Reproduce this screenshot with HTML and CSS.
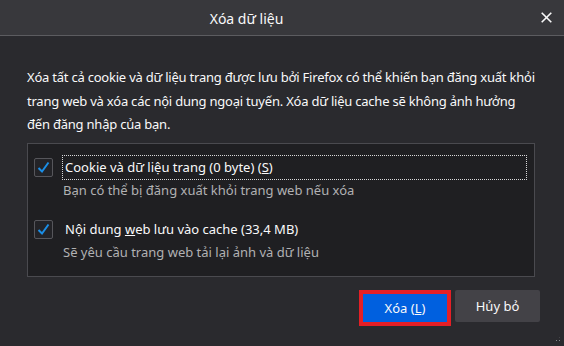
FILE: index.html
```html
<!DOCTYPE html>
<html lang="vi">
<head>
    <meta charset="utf-8">
    <title>Xóa dữ liệu</title>
    <link rel="stylesheet" href="styles.css">
</head>
<body>
<div class="dialog">
    <div class="titlebar">
        <div class="title">Xóa dữ liệu</div>
        <div class="close">
            <svg width="11" height="11" viewBox="0 0 11 11"><path d="M0.7 0.7 L10.3 10.3 M10.3 0.7 L0.7 10.3" stroke="#f9f9fa" stroke-width="1.6" fill="none"/></svg>
        </div>
    </div>
    <div class="content">
        <p class="intro">Xóa tất cả cookie và dữ liệu trang được lưu bởi Firefox có thể khiến bạn đăng xuất khỏi trang web và xóa các nội dung ngoại tuyến. Xóa dữ liệu cache sẽ không ảnh hưởng đến đăng nhập của bạn.</p>

        <div class="listbox">
            <div class="item">
                <div class="row">
                    <span class="check"><svg width="17" height="17" viewBox="0 0 17 17"><path d="M3.5 9 L7 12.5 L13.5 3.5" stroke="#1b8ee6" stroke-width="2" fill="none"/></svg></span>
                    <span class="label focused">Cookie và dữ liệu trang (0 byte) (<u>S</u>)</span>
                </div>
                <div class="desc">Bạn có thể bị đăng xuất khỏi trang web nếu xóa</div>
            </div>
            <div class="item">
                <div class="row">
                    <span class="check"><svg width="17" height="17" viewBox="0 0 17 17"><path d="M3.5 9 L7 12.5 L13.5 3.5" stroke="#1b8ee6" stroke-width="2" fill="none"/></svg></span>
                    <span class="label">Nội dung <u>w</u>eb lưu vào cache (33,4 MB)</span>
                </div>
                <div class="desc">Sẽ yêu cầu trang web tải lại ảnh và dữ liệu</div>
            </div>
        </div>

        <div class="buttons">
            <button class="btn primary">Xóa (<u>L</u>)</button>
            <button class="btn">Hủy bỏ</button>
        </div>
    </div>
    <div class="grip"></div>
</div>
</body>
</html>
```

FILE: styles.css
```css
* {
    box-sizing: border-box;
}

html,
body {
    margin: 0;
    padding: 0;
    width: 564px;
    height: 346px;
    overflow: hidden;
    background: #2a2a2e;
}

body {
    font-family: "Noto Sans", "Open Sans", sans-serif;
    font-size: 13px;
    color: #f9f9fa;
}

.dialog {
    position: relative;
    width: 564px;
    height: 346px;
}

.titlebar {
    display: flex;
    align-items: center;
    height: 36px;
    background: #38383c;
    border-bottom: 1px solid #5c5c60;
}

.title {
    flex: 1;
    text-align: center;
    font-size: 14px;
    padding-top: 1px;
}

.close {
    width: 71px;
    display: flex;
    justify-content: flex-end;
    padding-right: 12px;
    padding-bottom: 1px;
}

.close svg {
    display: block;
}

.content {
    padding: 30px 29px 0 27px;
}

.intro {
    margin: 0 -1px 0 0;
    line-height: 23.5px;
    letter-spacing: -0.22px;
}

.listbox {
    margin-top: 6px;
    height: 134px;
    background: #1f1f22;
    border: 1px solid #4a4a4f;
    padding: 11px 7px 0 6px;
}

.item + .item {
    margin-top: 17px;
}

.row {
    display: flex;
    align-items: center;
    height: 25px;
}

.check {
    width: 19px;
    height: 19px;
    border: 1px solid #56565b;
    border-radius: 2px;
    background: #232327;
    margin-right: 9px;
    display: flex;
    align-items: center;
    justify-content: center;
}

.check svg {
    display: block;
}

.label {
    flex: 1;
    height: 25px;
    line-height: 23px;
    padding: 0 2px;
    border: 1px dotted transparent;
}

.label.focused {
    border-color: #d8d8da;
}

.desc {
    line-height: 20px;
    padding-left: 29px;
    color: #b1b1b3;
}

.buttons {
    display: flex;
    justify-content: flex-end;
    align-items: flex-start;
    gap: 4px;
    margin-top: 13px;
    margin-right: -5px;
}

.btn {
    font-family: inherit;
    font-size: 13px;
    color: #f9f9fa;
    background: #434247;
    border: none;
    border-radius: 2px;
    height: 32px;
    width: 85px;
    padding: 0;
}

.btn.primary {
    width: 92px;
    height: 36px;
    background: #0060df;
    border: 4px solid #e41f26;
    border-radius: 0;
}

.grip {
    position: absolute;
    right: 2px;
    bottom: 3px;
    width: 10px;
    height: 7px;
    background:
        radial-gradient(circle, #8a8a8e 0.8px, transparent 1px) 0 0 / 3px 3px;
    clip-path: polygon(100% 0, 100% 100%, 0 100%);
}
```
